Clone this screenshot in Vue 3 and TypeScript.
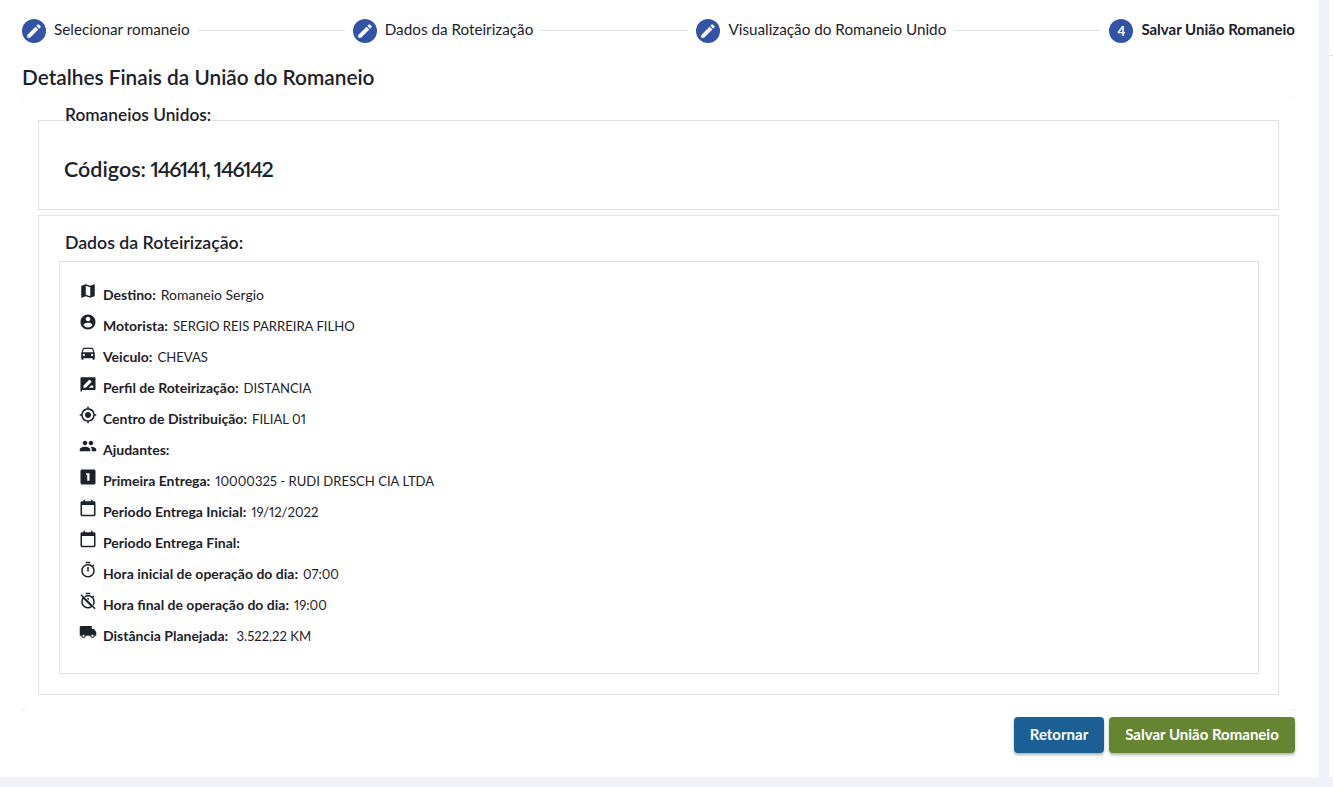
<script setup lang="ts">
const steps = [
  { label: 'Selecionar romaneio', done: true },
  { label: 'Dados da Roteirização', done: true },
  { label: 'Visualização do Romaneio Unido', done: true },
  { label: 'Salvar União Romaneio', done: false },
]
const paths: Record<string, string> = {
  map: 'M20.5 3l-.16.03L15 5.1 9 3 3.36 4.9c-.21.07-.36.25-.36.48V20.5c0 .28.22.5.5.5l.16-.03L9 18.9l6 2.1 5.64-1.9c.21-.07.36-.25.36-.48V3.5c0-.28-.22-.5-.5-.5zM15 19l-6-2.11V5l6 2.11V19z',
  account: 'M12 2C6.48 2 2 6.48 2 12s4.48 10 10 10 10-4.48 10-10S17.52 2 12 2zm0 3c1.66 0 3 1.34 3 3s-1.34 3-3 3-3-1.34-3-3 1.34-3 3-3zm0 14.2c-2.5 0-4.71-1.28-6-3.22.03-1.99 4-3.08 6-3.08 1.99 0 5.97 1.09 6 3.08-1.29 1.94-3.5 3.22-6 3.22z',
  car: 'M18.92 6.01C18.72 5.42 18.16 5 17.5 5h-11c-.66 0-1.21.42-1.42 1.01L3 12v8c0 .55.45 1 1 1h1c.55 0 1-.45 1-1v-1h12v1c0 .55.45 1 1 1h1c.55 0 1-.45 1-1v-8l-2.08-5.99zM6.5 16c-.83 0-1.5-.67-1.5-1.5S5.67 13 6.5 13s1.5.67 1.5 1.5S7.33 16 6.5 16zm11 0c-.83 0-1.5-.67-1.5-1.5s.67-1.5 1.5-1.5 1.5.67 1.5 1.5-.67 1.5-1.5 1.5zM5 11l1.5-4.5h11L19 11H5z',
  profile: 'M3 3h18a1 1 0 0 1 1 1v15a1 1 0 0 1-1 1H4v2H2V4a1 1 0 0 1 1-1zm3 14h3l8-8-3-3-8 8v3zm7 0h6v-3h-3l-3 3z',
  target: 'M12 8c-2.21 0-4 1.79-4 4s1.79 4 4 4 4-1.79 4-4-1.79-4-4-4zm8.94 3A8.994 8.994 0 0 0 13 3.06V1h-2v2.06A8.994 8.994 0 0 0 3.06 11H1v2h2.06A8.994 8.994 0 0 0 11 20.94V23h2v-2.06A8.994 8.994 0 0 0 20.94 13H23v-2h-2.06zM12 19c-3.87 0-7-3.13-7-7s3.13-7 7-7 7 3.13 7 7-3.13 7-7 7z',
  people: 'M16 11c1.66 0 2.99-1.34 2.99-3S17.66 5 16 5c-1.66 0-3 1.34-3 3s1.34 3 3 3zm-8 0c1.66 0 2.99-1.34 2.99-3S9.66 5 8 5C6.34 5 5 6.34 5 8s1.34 3 3 3zm0 2c-2.33 0-7 1.17-7 3.5V19h14v-2.5c0-2.33-4.67-3.5-7-3.5zm8 0c-.29 0-.62.02-.97.05 1.16.84 1.97 1.97 1.97 3.45V19h6v-2.5c0-2.33-4.67-3.5-7-3.5z',
  one: 'M4 2h16c1.1 0 2 .9 2 2v16c0 1.1-.9 2-2 2H4c-1.1 0-2-.9-2-2V4c0-1.1.9-2 2-2zm10 15V7h-4.5v2H11v8h3z',
  calendar: 'M6 1h2v2h8V1h2v2h2c1.1 0 2 .9 2 2v16c0 1.1-.9 2-2 2H4c-1.1 0-2-.9-2-2V5c0-1.1.9-2 2-2h2V1zM4 8v13h16V8H4z',
  timer: 'M15 1H9v2h6V1zm-4 13h2V8h-2v6zm8.03-6.61 1.42-1.42c-.43-.51-.9-.99-1.41-1.41l-1.42 1.42A8.962 8.962 0 0 0 12 4c-4.97 0-9 4.03-9 9s4.02 9 9 9 9-4.03 9-9c0-2.12-.74-4.07-1.97-5.61zM12 20c-3.87 0-7-3.13-7-7s3.13-7 7-7 7 3.13 7 7-3.13 7-7 7z',
  timerOff: 'M15 1H9v2h6V1zm-4 7v1.46l2 2V8h-2zm1-2c3.87 0 7 3.13 7 7 0 1.29-.35 2.49-.96 3.52l1.46 1.46A8.94 8.94 0 0 0 21 13c0-2.12-.74-4.07-1.97-5.61l1.42-1.42c-.43-.51-.9-.99-1.41-1.41l-1.42 1.42A8.962 8.962 0 0 0 12 4c-1.83 0-3.53.55-4.95 1.5l1.46 1.46A6.96 6.96 0 0 1 12 6zM3.41 2.86 2 4.27l2.75 2.75A8.96 8.96 0 0 0 3 13c0 4.97 4.03 9 9 9 2.12 0 4.07-.74 5.61-1.97L20.73 23l1.41-1.41L3.41 2.86zM12 20c-3.87 0-7-3.13-7-7 0-1.29.35-2.49.96-3.52l9.56 9.56A6.96 6.96 0 0 1 12 20z',
  truck: 'M20 8h-3V4H3c-1.1 0-2 .9-2 2v11h2c0 1.66 1.34 3 3 3s3-1.34 3-3h6c0 1.66 1.34 3 3 3s3-1.34 3-3h2v-5l-3-4zM6 18.5c-.83 0-1.5-.67-1.5-1.5s.67-1.5 1.5-1.5 1.5.67 1.5 1.5-.67 1.5-1.5 1.5zm12 0c-.83 0-1.5-.67-1.5-1.5s.67-1.5 1.5-1.5 1.5.67 1.5 1.5-.67 1.5-1.5 1.5z',
}
const rows = [
  { icon: 'map', label: 'Destino:', value: 'Romaneio Sergio', mixed: true },
  { icon: 'account', label: 'Motorista:', value: 'SERGIO REIS PARREIRA FILHO' },
  { icon: 'car', label: 'Veiculo:', value: 'CHEVAS' },
  { icon: 'profile', label: 'Perfil de Roteirização:', value: 'DISTANCIA' },
  { icon: 'target', label: 'Centro de Distribuição:', value: 'FILIAL 01' },
  { icon: 'people', label: 'Ajudantes:', value: '' },
  { icon: 'one', label: 'Primeira Entrega:', value: '10000325 - RUDI DRESCH CIA LTDA' },
  { icon: 'calendar', label: 'Periodo Entrega Inicial:', value: '19/12/2022' },
  { icon: 'calendar', label: 'Periodo Entrega Final:', value: '' },
  { icon: 'timer', label: 'Hora inicial de operação do dia:', value: '07:00' },
  { icon: 'timerOff', label: 'Hora final de operação do dia:', value: '19:00' },
  { icon: 'truck', label: 'Distância Planejada:', value: '\u00a03.522,22 KM' },
]
</script>

<template>
  <div class="page">
    <main class="panel">
      <nav class="stepper">
        <template v-for="(s, i) in steps" :key="s.label">
          <div class="step" :class="{ active: !s.done }">
            <span class="dot">
              <svg v-if="s.done" viewBox="0 0 24 24" width="18" height="18"><path fill="#fff" d="M3 17.25V21h3.75L17.81 9.94l-3.75-3.75L3 17.25zM20.71 7.04a1 1 0 0 0 0-1.41l-2.34-2.34a1 1 0 0 0-1.41 0l-1.83 1.83 3.75 3.75 1.83-1.83z"/></svg>
              <template v-else>{{ i + 1 }}</template>
            </span>
            <span class="step-label">{{ s.label }}</span>
          </div>
          <div v-if="i < steps.length - 1" class="line"></div>
        </template>
      </nav>

      <h1 class="title">Detalhes Finais da União do Romaneio</h1>
      <div class="ticks faint"><span></span><span></span></div>

      <section class="box codes">
        <h2 class="legend">Romaneios Unidos:</h2>
        <p class="code-text">Códigos: <span class="code-nums">146141, 146142</span></p>
      </section>

      <section class="box route">
        <h2 class="route-title">Dados da Roteirização:</h2>
        <div class="inner">
          <div v-for="r in rows" :key="r.label" class="row">
            <svg class="icon" viewBox="0 0 24 24" width="18" height="18"><path fill="#1d2129" fill-rule="evenodd" :d="paths[r.icon]"/></svg>
            <strong>{{ r.label }}</strong>
            <span v-if="r.value" class="value" :class="{ mixed: r.mixed }">{{ r.value }}</span>
          </div>
        </div>
      </section>

      <div class="ticks"><span></span><span></span></div>

      <footer class="actions">
        <button class="btn back">Retornar</button>
        <button class="btn save">Salvar União Romaneio</button>
      </footer>
    </main>
    <aside class="sliver"><div class="sliver-line"></div></aside>
  </div>
</template>

<style>
html, body { margin: 0; background: #f1f2f8; }
</style>

<style scoped>
.page {
  display: flex;
  gap: 10px;
  height: 787px;
  overflow: hidden;
  font-family: "Lato", "Liberation Sans", sans-serif;
  color: #1d2129;
  font-variant-numeric: proportional-nums;
}
.panel {
  width: 1319px;
  height: 777px;
  flex: none;
  background: #fff;
  box-sizing: border-box;
  padding: 19px 24px 0 22px;
}
.sliver { flex: 1; height: 777px; background: #fff; padding-top: 55px; box-sizing: border-box; }
.sliver-line { height: 1px; background: #dfe0e6; }
.stepper { display: flex; align-items: center; height: 24px; }
.step { display: flex; align-items: center; gap: 8px; font-size: 15.25px; white-space: nowrap; }
.step.active { font-size: 15px; font-weight: 700; }
.step-label { position: relative; top: -2px; }
.dot {
  width: 24px; height: 24px; border-radius: 50%;
  background: #3353a6; color: #fff;
  display: flex; align-items: center; justify-content: center;
  font-size: 13px; font-weight: 700;
}
.line { flex: 1; height: 1px; background: #dfe0e6; margin: 0 8px; position: relative; top: -1px; }
.title { margin: 22px 0 0; font-size: 20.8px; line-height: 24px; font-weight: 600; }
.ticks { display: flex; justify-content: space-between; height: 2px; margin-top: 14px; }
.ticks span { width: 3px; height: 1px; background: #e3e4ea; }
.ticks.faint { height: 1px; margin-top: 8px; }
.ticks.faint span { background: #f2f2f5; }
.box { border: 1px solid #e0e1e7; margin: 0 16px; box-sizing: border-box; }
.codes { position: relative; margin-top: 22px; height: 90px; padding: 36px 25px 0; }
.legend {
  position: absolute; left: 26px; top: -18px; margin: 0;
  font-size: 17.3px; line-height: 24px; font-weight: 600;
  background: #fff;
  padding-right: 1px;
}
.code-text { margin: 0; font-size: 21.5px; line-height: 24px; font-weight: 600; }
.code-nums { letter-spacing: -1.3px; margin-left: -1px; }
.route { margin-top: 5px; height: 480px; padding: 15px 19px 0 20px; }
.route-title { margin: 0 0 6px 6px; font-size: 17.7px; line-height: 24px; font-weight: 600; }
.inner { border: 1px solid #e0e1e7; height: 413px; box-sizing: border-box; padding: 17px 19px 0; }
.row { display: flex; align-items: center; height: 31px; font-size: 13.1px; gap: 5px; }
.row strong { font-size: 14px; font-weight: 700; }
.mixed { font-size: 14px; }
.icon { margin-right: 1px; transform: translateY(-4px); flex: none; }
.actions { display: flex; justify-content: flex-end; gap: 5px; margin-top: 6px; }
.btn {
  height: 36px; border: 0; border-radius: 4px; color: #fff; padding: 0 0 2px;
  font: 700 15px "Lato", "Liberation Sans", sans-serif;
  box-shadow: 0 2px 3px rgba(0,0,0,.3);
}
.back { width: 90px; background: #1a6094; }
.save { width: 186px; background: #658533; }
</style>
